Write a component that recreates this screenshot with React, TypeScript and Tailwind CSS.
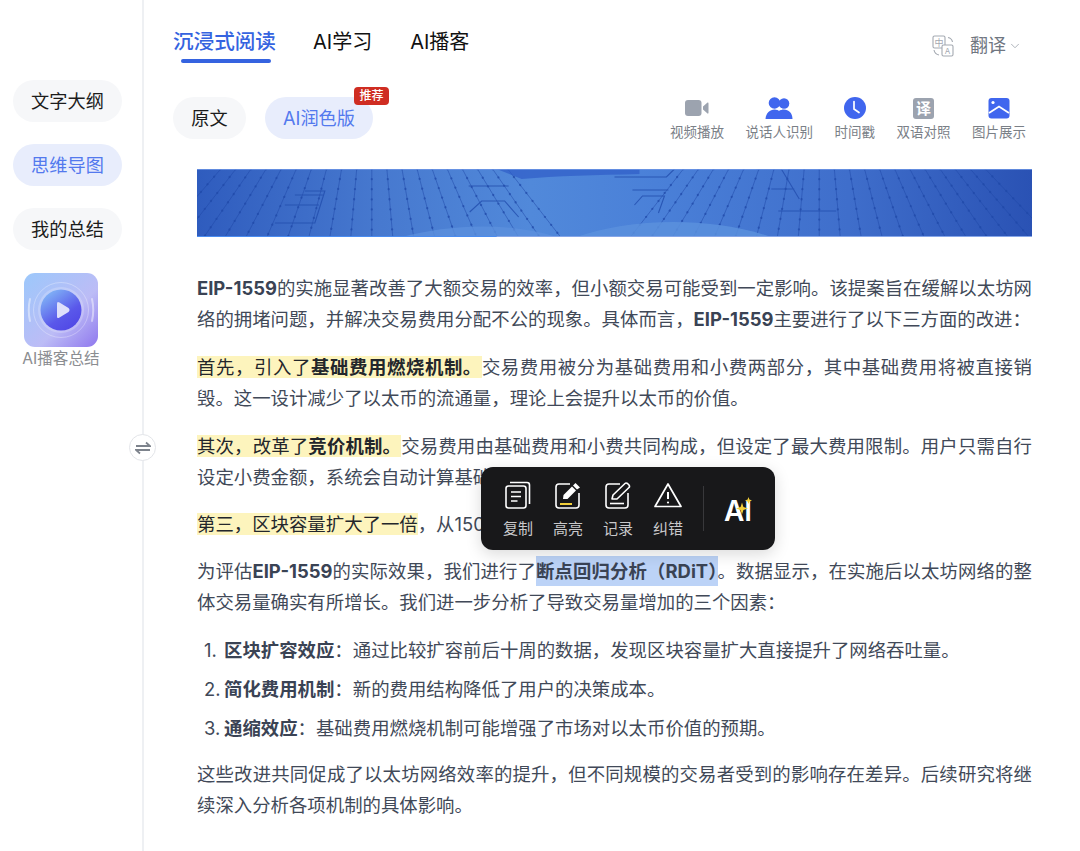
import { ChevronDown } from "lucide-react"

const sideItems = [
  { label: "文字大纲", active: false },
  { label: "思维导图", active: true },
  { label: "我的总结", active: false },
]

function VideoIcon() {
  return (
    <svg width="26" height="22" viewBox="0 0 26 22">
      <rect x="1" y="3" width="16.5" height="16" rx="3" fill="#9ca3af" />
      <path d="M19 9.5 L23.5 5.5 Q24.5 5 24.5 6.5 V15.5 Q24.5 17 23.5 16.5 L19 12.5 Z" fill="#9ca3af" />
    </svg>
  )
}

function PeopleIcon() {
  return (
    <svg width="28" height="22" viewBox="0 0 28 22">
      <circle cx="9.5" cy="6" r="5.8" fill="#4066ee" />
      <circle cx="19" cy="6.5" r="5.3" fill="#4066ee" />
      <path d="M0.5 22 C1 16 5 12.5 9.5 12.5 C12 12.5 13.5 13.5 14 14 C15 13 17 12.5 19 12.5 C23.5 12.5 27.5 16 27.5 22 Z" fill="#4066ee" />
      <path d="M11.5 12.2 C13 11 15.5 11 17 12.2" stroke="#fff" strokeWidth="1.1" fill="none" />
    </svg>
  )
}

function ClockIcon() {
  return (
    <svg width="22" height="22" viewBox="0 0 22 22">
      <circle cx="11" cy="11" r="11" fill="#4066ee" />
      <path d="M10 4.5 V12 L15 15.5" stroke="#fff" strokeWidth="1.7" fill="none" strokeLinecap="round" />
    </svg>
  )
}

function PictureIcon() {
  return (
    <svg width="22" height="21" viewBox="0 0 22 21">
      <rect x="0.5" y="0" width="21" height="20.5" rx="3" fill="#4066ee" />
      <circle cx="5" cy="4.5" r="1.6" fill="#fff" />
      <path d="M1 15 L11 8.5 L21 15" stroke="#fff" strokeWidth="1.8" fill="none" />
    </svg>
  )
}

function TranslateBadge() {
  return (
    <div className="flex h-[21px] w-[21px] items-center justify-center rounded-[3px] bg-[#9ca3af] text-[15px] leading-none font-bold text-white">
      译
    </div>
  )
}

function TranslateIcon() {
  return (
    <svg width="22" height="22" viewBox="0 0 22 22" fill="none" stroke="#a4a9b1" strokeWidth="1.1">
      <rect x="1" y="1" width="12" height="12" rx="1.5" />
      <rect x="10" y="10" width="11" height="11" rx="1.5" fill="#fff" />
      <text x="7" y="10.5" fontSize="9" textAnchor="middle" fill="#a4a9b1" stroke="none">中</text>
      <text x="15.5" y="18.8" fontSize="8" textAnchor="middle" fill="#a4a9b1" stroke="none">A</text>
      <path d="M16 2.5 C18.5 3 20 4.5 20.5 7" />
      <path d="M2 15 C2.5 17.5 4 19.5 7 20" />
    </svg>
  )
}

const tools = [
  { label: "视频播放", icon: <VideoIcon /> },
  { label: "说话人识别", icon: <PeopleIcon /> },
  { label: "时间戳", icon: <ClockIcon /> },
  { label: "双语对照", icon: <TranslateBadge /> },
  { label: "图片展示", icon: <PictureIcon /> },
]

// the picture has two fans of dotted lines, one around x=175 and one around x=623
function fanLines(center: number, from: number, to: number) {
  const lines: { x1: number; x2: number }[] = []
  for (let k = from; k <= to; k++) {
    const bottom = center + k * 21
    lines.push({ x1: center + (bottom - center) * 0.72, x2: bottom })
  }
  return lines
}

function Banner() {
  const fans = [...fanLines(175, -10, 9), ...fanLines(623, -9, 11)]
  return (
    <svg className="block h-[68px] w-full" viewBox="0 0 836 68" preserveAspectRatio="none">
      <defs>
        <linearGradient id="bannerBg" x1="0" y1="0" x2="1" y2="0">
          <stop offset="0" stopColor="#2f5cbe" />
          <stop offset="0.22" stopColor="#4779cf" />
          <stop offset="0.4" stopColor="#5189da" />
          <stop offset="0.55" stopColor="#4a80d8" />
          <stop offset="0.78" stopColor="#3f6ecb" />
          <stop offset="1" stopColor="#2a52b4" />
        </linearGradient>
      </defs>
      <rect width="836" height="68" fill="url(#bannerBg)" />
      <g stroke="#1f48a8" fill="none">
        {fans.map((l) => (
          <g key={`${l.x1}-${l.x2}`}>
            <line x1={l.x1} y1="0" x2={l.x2} y2="68" strokeWidth="0.9" opacity="0.55" />
            <line x1={l.x1} y1="0" x2={l.x2} y2="68" strokeWidth="2.2" strokeLinecap="round" strokeDasharray="0.1 10" opacity="0.7" />
          </g>
        ))}
      </g>
      <g stroke="#2450b0" strokeWidth="1.1" fill="none" opacity="0.85">
        <path d="M78 54 H118 L128 22 H108 M88 36 H122 M98 26 H126" />
        <path d="M272 17 H312 M273 43 L285 32 H308 L322 48" />
        <path d="M418 8 H470 L478 0 M436 21 H472 M438 36 L446 27 H468 L462 44" />
        <path d="M560 0 H585 L603 30 M575 20 H598 M582 42 H640" />
      </g>
      <path d="M300 0 H443 V5 C400 6 360 7 325 10 Z" fill="#2f5cc8" opacity="0.7" />
      <path d="M205 68 C250 56 310 52 360 68 Z" fill="#5b90dd" opacity="0.8" />
      <path d="M380 68 C430 50 510 46 575 68 Z" fill="#5b90dd" opacity="0.85" />
      <rect y="67" width="300" height="1" fill="#4a8cf0" />
      <rect x="300" y="67" width="536" height="1" fill="#86a6e8" />
      <rect width="836" height="0.8" fill="#6f97e6" />
    </svg>
  )
}

function PodcastIcon() {
  return (
    <svg width="74" height="74" viewBox="0 0 74 74">
      <defs>
        <linearGradient id="podBg" x1="0" y1="0" x2="1" y2="1">
          <stop offset="0" stopColor="#9cc8fb" />
          <stop offset="0.6" stopColor="#bcbcf6" />
          <stop offset="1" stopColor="#8f77ee" />
        </linearGradient>
        <linearGradient id="podBall" x1="0.1" y1="0" x2="0.8" y2="1">
          <stop offset="0" stopColor="#86c0f8" />
          <stop offset="0.65" stopColor="#5a58ea" />
          <stop offset="1" stopColor="#4f46e5" />
        </linearGradient>
      </defs>
      <rect width="74" height="74" rx="11" fill="url(#podBg)" />
      <circle cx="37" cy="37" r="27.5" fill="none" stroke="#fff" strokeOpacity="0.3" />
      <circle cx="37" cy="37" r="23" fill="#fff" fillOpacity="0.2" />
      <circle cx="37" cy="37" r="20.5" fill="url(#podBall)" />
      <path d="M33 30.5 Q33 28 35.5 29.5 L44.5 35 Q46.5 37 44.5 39 L35.5 44.5 Q33 46 33 43.5 Z" fill="#dfe0fb" />
      <g stroke="#fff" strokeOpacity="0.45" strokeWidth="2" fill="none" strokeLinecap="round">
        <path d="M6 26 Q3.5 37 6 48" />
        <path d="M68 26 Q70.5 37 68 48" />
      </g>
    </svg>
  )
}

function CopyIcon() {
  return (
    <svg width="26" height="28" viewBox="0 0 26 28" fill="none" stroke="#fff" strokeWidth="1.6" strokeLinejoin="round">
      <rect x="1" y="5" width="20" height="22" rx="2.5" />
      <path d="M5 1.5 H22 Q24.5 1.5 24.5 4 V23" />
      <path d="M6 11 H16 M6 15.5 H16 M6 20 H12.5" />
    </svg>
  )
}

function HighlightIcon() {
  return (
    <svg width="26" height="28" viewBox="0 0 26 28" fill="none" stroke="#fff" strokeWidth="1.6" strokeLinejoin="round">
      <path d="M15 3 H4 Q1 3 1 6 V24 Q1 27 4 27 H21 Q24 27 24 24 V12" />
      <path d="M8 18 L8.5 14 L17 5.5 L21 9.5 L12.5 18 Z" fill="#fff" stroke="none" />
      <path d="M18 4.5 L20.5 2 L25 6.5 L22 8.5 Z" fill="#fff" stroke="none" />
      <path d="M5 23 H17" stroke="#f2cf3a" strokeWidth="2" />
    </svg>
  )
}

function NoteIcon() {
  return (
    <svg width="26" height="28" viewBox="0 0 26 28" fill="none" stroke="#fff" strokeWidth="1.6" strokeLinejoin="round">
      <path d="M15 3 H4 Q1 3 1 6 V24 Q1 27 4 27 H20 Q23 27 23 24 V12" />
      <path d="M7 18 L8 14 L20 2.5 Q21 1.5 22.5 2.5 L24 4 Q25 5.5 24 6.5 L12 18 Z" />
      <path d="M5 22.5 H19" />
    </svg>
  )
}

function WarnIcon() {
  return (
    <svg width="28" height="26" viewBox="0 0 28 26" fill="none" stroke="#fff" strokeWidth="1.7" strokeLinejoin="round">
      <path d="M14 2 L27 24.5 H1 Z" />
      <path d="M14 10 V17" strokeWidth="2" />
      <circle cx="14" cy="20.5" r="1.1" fill="#fff" stroke="none" />
    </svg>
  )
}

const popupItems = [
  { label: "复制", icon: <CopyIcon /> },
  { label: "高亮", icon: <HighlightIcon /> },
  { label: "记录", icon: <NoteIcon /> },
  { label: "纠错", icon: <WarnIcon /> },
]

function AiLogo() {
  return (
    <div className="relative h-[34px] w-[32px] text-[28px] leading-[39px] font-semibold text-white">
      AI
      <svg className="absolute top-0 left-0" width="34" height="34" viewBox="0 0 34 34" fill="#f2cf3a">
        <path d="M18 10.5 L19.4 15 L24 16.5 L19.4 18 L18 22.5 L16.6 18 L12 16.5 L16.6 15 Z" />
        <path d="M24.5 5 L25.4 7.6 L28 8.5 L25.4 9.4 L24.5 12 L23.6 9.4 L21 8.5 L23.6 7.6 Z" />
      </svg>
    </div>
  )
}

function Mark({ children }: { children: React.ReactNode }) {
  return <span className="bg-[#fdf4bd] text-[#23262b]">{children}</span>
}

function B({ children }: { children: React.ReactNode }) {
  return <strong className="font-bold text-[#3a4354]">{children}</strong>
}

export default function App() {
  return (
    <div className="relative flex h-[851px] w-[1080px] overflow-hidden bg-white font-['Inter','Noto_Sans_CJK_SC',sans-serif]">
      {/* left rail */}
      <aside className="flex w-[144px] shrink-0 flex-col border-r-2 border-[#eef0f3] pt-[80px] pl-[13px]">
        <div className="flex w-[109px] flex-col gap-[22px]">
          {sideItems.map((item) => (
            <div
              key={item.label}
              className={
                item.active
                  ? "flex h-[42px] items-center justify-center rounded-full bg-[#e8edfc] pt-[1px] text-[18.2px] text-[#5379ee]"
                  : "flex h-[42px] items-center justify-center rounded-full bg-[#f6f7f9] pt-[1px] text-[18.2px] text-[#1c1c1c]"
              }
            >
              {item.label}
            </div>
          ))}
        </div>
        <div className="mt-[23px] flex w-[96px] flex-col items-center">
          <PodcastIcon />
          <div className="mt-[1px] text-[15.6px] leading-[22px] whitespace-nowrap text-[#8b8d91]">AI播客总结</div>
        </div>
      </aside>

      <main className="min-w-0 flex-1">
        {/* tabs */}
        <div className="flex h-[63px] items-start pt-[27px] pr-[58px] pl-[29px]">
          <div className="relative mr-[37px] text-[20.6px] leading-[30px] font-medium text-[#3563e0]">
            沉浸式阅读
            <div className="absolute top-[32px] left-[8px] h-[4px] w-[90px] rounded-full bg-[#3563e0]" />
          </div>
          <div className="mr-[38px] text-[20px] leading-[30px] text-[#111]">AI学习</div>
          <div className="text-[20px] leading-[30px] text-[#111]">AI播客</div>
          <div className="ml-auto flex items-center pt-[5px]">
            <TranslateIcon />
            <span className="ml-[16px] text-[18px] leading-[28px] text-[#6f7680]">翻译</span>
            <ChevronDown className="ml-[2px] h-[14px] w-[14px] text-[#a4a9b1]" strokeWidth={1.5} />
          </div>
        </div>

        {/* mode pills + tools */}
        <div className="flex h-[106px] items-start pt-[25px] pr-[54px] pl-[29px]">
          <div className="mt-[9px] flex h-[42px] w-[73px] items-center justify-center rounded-full bg-[#f6f7f9] pt-[1px] text-[18.2px] text-[#1c1c1c]">
            原文
          </div>
          <div className="relative mt-[9px] ml-[19px] flex h-[42px] w-[108px] items-center justify-center rounded-full bg-[#e8edfc] pt-[1px] text-[18.2px] text-[#5379ee]">
            AI润色版
            <span className="absolute top-[-10px] left-[89px] flex h-[18px] w-[35px] items-center justify-center rounded-[4px] bg-[#cf2d22] text-[12px] font-medium text-white">
              推荐
            </span>
          </div>
          <div className="mt-[7px] ml-auto flex gap-[21.5px]">
            {tools.map((tool) => (
              <div key={tool.label} className="flex flex-col items-center">
                <div className="flex h-[26px] items-center justify-center">{tool.icon}</div>
                <div className="mt-[1px] text-[13.5px] leading-[20px] whitespace-nowrap text-[#7a8087]">{tool.label}</div>
              </div>
            ))}
          </div>
        </div>

        {/* article */}
        <article className="ml-[53px] w-[835px] text-justify text-[18.4px] leading-[31px] text-[#414958]">
          <Banner />
          <p className="mt-[36px]">
            <B>EIP-1559</B>的实施显著改善了大额交易的效率，但小额交易可能受到一定影响。该提案旨在缓解以太坊网络的拥堵问题，并解决交易费用分配不公的现象。具体而言，<B>EIP-1559</B>主要进行了以下三方面的改进：
          </p>
          <p className="mt-[17px]">
            <Mark>首先，引入了<strong className="font-bold">基础费用燃烧机制。</strong></Mark>交易费用被分为基础费用和小费两部分，其中基础费用将被直接销毁。这一设计减少了以太币的流通量，理论上会提升以太币的价值。
          </p>
          <p className="mt-[17px]">
            <Mark>其次，改革了<strong className="font-bold">竞价机制。</strong></Mark>交易费用由基础费用和小费共同构成，但设定了最大费用限制。用户只需自行设定小费金额，系统会自动计算基础费用。
          </p>
          <p className="mt-[16px]">
            <Mark>第三，区块容量扩大了一倍</Mark>，从1500万Gas提升至3000万。
          </p>
          <p className="mt-[16px]">
            为评估<B>EIP-1559</B>的实际效果，我们进行了<span className="bg-[#bcd3f7] py-[4px] font-bold text-[#3a4354]">断点回归分析（RDiT）</span>。数据显示，在实施后以太坊网络的整体交易量确实有所增长。我们进一步分析了导致交易量增加的三个因素：
          </p>
          <ol className="mt-[17px] flex flex-col gap-[8px]">
            <li className="flex">
              <span className="w-[27px] pl-[7px]">1.</span>
              <span><B>区块扩容效应</B>：通过比较扩容前后十周的数据，发现区块容量扩大直接提升了网络吞吐量。</span>
            </li>
            <li className="flex">
              <span className="w-[27px] pl-[7px]">2.</span>
              <span><B>简化费用机制</B>：新的费用结构降低了用户的决策成本。</span>
            </li>
            <li className="flex">
              <span className="w-[27px] pl-[7px]">3.</span>
              <span><B>通缩效应</B>：基础费用燃烧机制可能增强了市场对以太币价值的预期。</span>
            </li>
          </ol>
          <p className="mt-[15px]">
            这些改进共同促成了以太坊网络效率的提升，但不同规模的交易者受到的影响存在差异。后续研究将继续深入分析各项机制的具体影响。
          </p>
        </article>
      </main>

      {/* rail collapse toggle */}
      <div className="absolute top-[434px] left-[129px] flex h-[27px] w-[27px] items-center justify-center rounded-full border border-[#e3e5e9] bg-white">
        <svg width="16" height="14" viewBox="0 0 16 14" fill="none" stroke="#7d838c" strokeWidth="1.8">
          <path d="M1 5 H15 L11 1.5" />
          <path d="M15 9 H1 L5 12.5" />
        </svg>
      </div>

      {/* selection popup */}
      <div className="absolute top-[467px] left-[481px] flex h-[83px] w-[294px] items-center rounded-[12px] bg-[#18181a] pl-[19px] shadow-[0_4px_16px_rgba(0,0,0,0.15)]">
        <div className="flex gap-[14px] pt-[1px]">
          {popupItems.map((item) => (
            <div key={item.label} className="flex w-[36px] flex-col items-center">
              <div className="flex h-[30px] items-center justify-center">{item.icon}</div>
              <div className="mt-[9px] text-[15px] leading-[20px] whitespace-nowrap text-[#c9c9cb]">{item.label}</div>
            </div>
          ))}
        </div>
        <div className="ml-[17px] h-[45px] w-px bg-[#38383b]" />
        <div className="ml-[20px]">
          <AiLogo />
        </div>
      </div>
    </div>
  )
}
